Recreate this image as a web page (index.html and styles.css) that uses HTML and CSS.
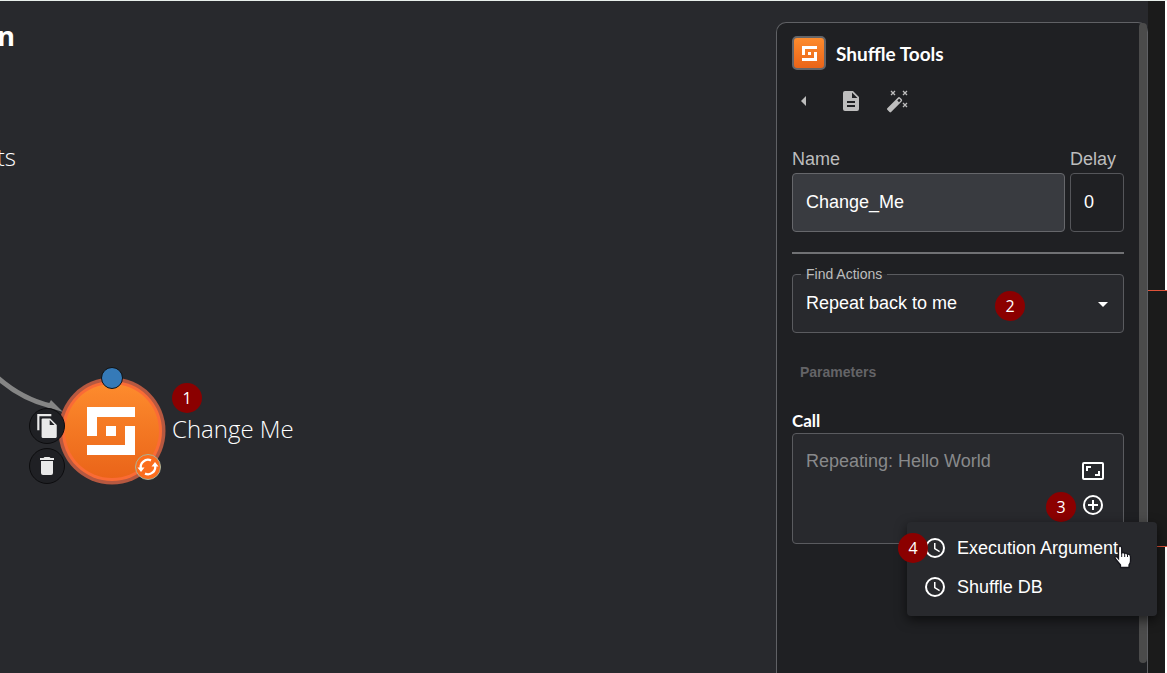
FILE: index.html
```
<!DOCTYPE html>
<html lang="en">
<head>
<meta charset="utf-8">
<title>Workflow editor</title>
<link rel="stylesheet" href="styles.css">
</head>
<body>
<svg class="defs" aria-hidden="true">
  <defs>
    <linearGradient id="orange" x1="0" y1="0" x2="0" y2="1"><stop offset="0" stop-color="#fd8b2d"/><stop offset="1" stop-color="#ea6419"/></linearGradient>
    <symbol id="shuffle" viewBox="0 0 48 48"><path fill="#fff" d="M0 0h48v10H10v19H0zM38 19h10v29H0V38h38zM19 19h10v10H19z"/></symbol>
    <symbol id="clock" viewBox="0 0 24 24"><path d="M12 2a10 10 0 1 0 0 20 10 10 0 0 0 0-20zm0 18a8 8 0 1 1 0-16 8 8 0 0 1 0 16zm.5-13H11v6l5.200 3.200.8-1.300-4.500-2.700z"/></symbol>
  </defs>
</svg>
<div class="editor">
  <main class="canvas">
    <h1 class="cut-title">n</h1>
    <p class="cut-text">ts</p>
    <svg class="edge" width="64" height="44" viewBox="0 0 64 44"><path d="M-2 8Q22 29 51 36" fill="none" stroke="#858585" stroke-width="5"/><path d="M51 30L63 42L47 37z" fill="#858585"/></svg>
    <svg class="node" width="108" height="108" viewBox="0 0 108 108" role="img" aria-label="Change Me node">
      <circle cx="54" cy="54" r="53.500" fill="#b65840"/><circle cx="54" cy="54" r="50" fill="#fa6b35"/><circle cx="54" cy="54" r="47" fill="url(#orange)"/>
      <use href="#shuffle" x="29" y="30" width="48" height="48"/>
    </svg>
    <span class="port"></span>
    <span class="loop"><svg width="24" height="24" viewBox="0 0 24 24" fill="none" stroke="#fff" stroke-width="2.300"><path d="M5 14a7.300 7.300 0 0 1 10-8.600M19 10a7.300 7.300 0 0 1-10 8.600"/><path d="M1.500 12.500h7L5 17zM15.500 11.500h7L19 7z" fill="#fff" stroke="none"/></svg></span>
    <button class="round copy" aria-label="Duplicate node"><svg width="26" height="26" viewBox="0 0 24 24" fill="#e9e9e9"><path d="M16 1H3v15h2V3h11zM8 5h7l6 6v11q0 1-1 1H8q-1 0-1-1V6q0-1 1-1z"/><path fill="#1f2024" d="M14.500 6.500V11H19z"/></svg></button>
    <button class="round trash" aria-label="Delete node"><svg width="24" height="24" viewBox="0 0 24 24" fill="#e9e9e9"><path d="M6 19a2 2 0 0 0 2 2h8a2 2 0 0 0 2-2V7H6zM19 4h-3.500l-1-1h-5l-1 1H5v2h14z"/></svg></button>
    <span class="node-label">Change Me</span>
    <span class="badge one">1</span>
  </main>

  <aside class="panel">
    <header class="head"><span class="logo"><svg width="15" height="15" viewBox="0 0 15 15" fill="#fff"><path d="M0 0h15v3H3v6H0zM12 6h3v9H0v-3h12zM6 6h3v3H6z"/></svg></span><h2>Shuffle Tools</h2></header>
    <div class="tools">
      <button aria-label="Back"><svg width="24" height="24" viewBox="0 0 24 24"><path d="M14 7l-5 5 5 5z"/></svg></button>
      <button aria-label="Documentation"><svg width="24" height="24" viewBox="0 0 24 24"><path d="M14 2H6a2 2 0 0 0-2 2v16a2 2 0 0 0 2 2h12a2 2 0 0 0 2-2V8zm2 16H8v-2h8zm0-4H8v-2h8zm-3-5V3.500L18.500 9z"/></svg></button>
      <button aria-label="Auto-fill"><svg width="24" height="24" viewBox="0 0 24 24"><path fill-rule="evenodd" d="M1.300 19.200L11.800 8.700q1.200-1.200 2.400 0l1.400 1.400q1.200 1.200 0 2.400L5.100 23q-.8.800-1.600 0l-2.200-2.200q-.8-.8 0-1.600zM11.300 11.500l1.700 1.700 1.500-1.500q.4-.4 0-.8l-.9-.9q-.4-.4-.8 0z"/><path fill="none" stroke="#bdbdbd" stroke-width="1.300" d="M5 2l4 4m0-4L5 6M17 2l4 4m0-4l-4 4M17 14l4 4m0-4l-4 4"/></svg></button>
    </div>
    <div class="pair">
      <div class="field grow"><label for="name">Name</label><input id="name" class="filled" value="Change_Me"></div>
      <div class="field delay"><label for="delay">Delay</label><input id="delay" value="0"></div>
    </div>
    <hr>
    <div class="action">
      <label for="action">Find Actions</label>
      <select id="action"><option>Repeat back to me</option></select>
      <svg class="caret" width="24" height="24" viewBox="0 0 24 24" fill="#fff"><path d="M7 10l5 5 5-5z"/></svg>
      <span class="badge two">2</span>
    </div>
    <h3>Parameters</h3>
    <label class="call-label" for="call">Call</label>
    <div class="call">
      <textarea id="call" placeholder="Repeating: Hello World"></textarea>
      <div class="call-tools">
        <button aria-label="Expand"><svg width="24" height="24" viewBox="0 0 24 24" fill="none" stroke="#fff" stroke-width="2"><rect x="2" y="4" width="20" height="16" rx="1"/><path d="M6 12V8h4M18 12v4h-4"/></svg></button>
        <button aria-label="Add value"><svg width="24" height="24" viewBox="0 0 24 24" fill="none" stroke="#fff" stroke-width="2"><circle cx="12" cy="12" r="9"/><path d="M12 7v10M7 12h10"/></svg></button>
      </div>
      <span class="badge three">3</span>
      <div class="menu">
        <button><svg width="24" height="24"><use href="#clock"/></svg>Execution Argument</button>
        <button><svg width="24" height="24"><use href="#clock"/></svg>Shuffle DB</button>
        <span class="badge four">4</span>
        <svg class="hand" width="18" height="24" viewBox="0 0 18 24"><path d="M4.500 13V3Q4.500 1 6 1t1.700 2v5Q9.500 6.800 10.700 8.500q1.800-.9 2.600.8Q16.500 8.700 16.500 12v4q0 2-1.500 4v2.500H6.500V20Q4 17 1.200 13.500.5 12 2 11.500q1 0 2.500 2z" fill="#fff" stroke="#16161c" stroke-width="1.300"/><path d="M7.700 8v4M10.700 8.500V12M13.500 9.500V12" stroke="#16161c"/></svg>
      </div>
    </div>
    <span class="scroll"></span>
  </aside>
  <div class="strip"><span></span><span class="mid"></span><span></span></div>
</div>
</body>
</html>
```
FILE: styles.css
```
* { box-sizing: border-box; }
body { margin: 0; background: #28292d; color: #fff; font: 18px/24px "Liberation Sans", Arial, sans-serif; }
button { padding: 0; border: 0; background: none; color: inherit; font: inherit; }
svg { display: block; flex: none; }
.defs { position: absolute; width: 0; height: 0; }
.editor { display: flex; height: 100vh; border-top: 1px solid #e8efeb; overflow: hidden; }
.canvas { position: relative; flex: 1; overflow: hidden; }

.cut-title, .cut-text, .edge, .node, .port, .loop, .round, .node-label, .badge { position: absolute; margin: 0; }
.cut-title { right: calc(100% - 15px); top: 17px; font: bold 27px/36px "Open Sans", sans-serif; }
.cut-text { right: calc(100% - 16px); top: 140px; font: 300 24px/32px "Open Sans", sans-serif; }
.edge { left: 0; top: 369px; }
.node { left: 58px; top: 376px; }
.port { left: 101px; top: 366px; width: 22px; height: 22px; border: 1px solid #111; border-radius: 50%; background: #357ab8; }
.loop { left: 135px; top: 453px; width: 26px; height: 26px; border: 1px solid #a9b49a; border-radius: 50%; background: #fb6d1d; }
.round { display: grid; place-items: center; left: 29px; width: 36px; height: 36px; border: 1px solid #0c0c0e; border-radius: 50%; background: #1f2024; }
.copy { top: 407px; }
.trash { top: 447px; }
.node-label { left: 172px; top: 412px; font: 300 24px/32px "Open Sans", sans-serif; white-space: nowrap; }
.badge { width: 30px; height: 30px; border-radius: 50%; background: #8b0000; font: 16px/30px "Open Sans", sans-serif; text-align: center; }
.one { left: 172px; top: 382px; }

.panel { position: relative; width: 372px; margin-top: 21px; padding: 13px 23px 0 15px; border: 1px solid #606165; border-bottom: 0; border-radius: 10px 10px 0 0; background: #1f2023; }
.head { display: flex; align-items: center; gap: 10px; }
.logo { display: grid; place-items: center; width: 34px; height: 34px; border: 2px solid #646569; border-radius: 5px; background: linear-gradient(#fd8b2d, #ea6419); }
h2 { margin: 0; padding-top: 2px; font: bold 19px/32px Lato, sans-serif; }
.tools { display: flex; gap: 23px; margin-top: 19px; fill: #bdbdbd; }
.pair { display: flex; gap: 5px; margin-top: 34px; }
.field { display: flex; flex-direction: column; gap: 2px; color: #bdbdbd; }
.grow { flex: 1; }
.delay { width: 54px; }
input { width: 100%; height: 59px; padding: 0 13px; border: 1px solid #55565a; border-radius: 4px; background: none; color: #fff; font: inherit; }
.filled { background: #393b40; border-color: #66676b; }
hr { height: 2px; margin: 20px 0; border: 0; background: #707174; }
.action { position: relative; height: 59px; }
.action label { position: absolute; left: 9px; top: -10px; padding: 0 5px; background: linear-gradient(#1f2023 50%, #28292d 50%); color: #bdbdbd; font-size: 14px; line-height: 20px; }
select { width: 100%; height: 59px; padding: 0 13px 2px; border: 1px solid #5a5b5f; border-radius: 4px; background: #28292d; color: #fff; font: inherit; appearance: none; }
.caret { position: absolute; right: 9px; top: 18px; pointer-events: none; }
.two { left: 203px; top: 17px; }
h3 { margin: 29px 8px 28px; color: #646467; font-size: 14px; line-height: 20px; }
.call-label { display: block; padding-bottom: 1px; font: bold 17px/22px Lato, sans-serif; }
.call { position: relative; display: flex; height: 111px; border: 1px solid #5a5b5f; border-radius: 4px; background: #28292d; }
textarea { flex: 1; min-width: 0; padding: 16px 13px; border: 0; background: none; color: #fff; font: inherit; line-height: 22px; resize: none; }
textarea::placeholder { color: #88898b; }
.call-tools { display: flex; flex-direction: column; gap: 10px; padding: 25px 18px 0 0; }
.three { right: 47px; top: 58px; }
.menu { position: absolute; right: -34px; top: 88px; z-index: 2; width: 250px; padding: 6px 0 10px; border-radius: 4px; background: #28292d; box-shadow: 0 4px 12px #0009; }
.menu button { display: flex; align-items: center; gap: 10px; width: 100%; height: 39px; padding: 0 16px; }
.menu button svg { fill: #fff; }
.four { left: -9px; top: 11px; }
.hand { position: absolute; left: 207px; top: 23px; }
.scroll { position: absolute; right: 0; top: 0; width: 8px; bottom: 10px; border-radius: 5px; background: #4b4b4b; }

.strip { display: grid; grid-template-rows: 289px 257px 1fr; width: 19px; background: #1b1b1b; }
.strip span { border-right: 2px solid #fff; }
.strip .mid { border: solid #e0533a; border-width: 1px 0; }
```
